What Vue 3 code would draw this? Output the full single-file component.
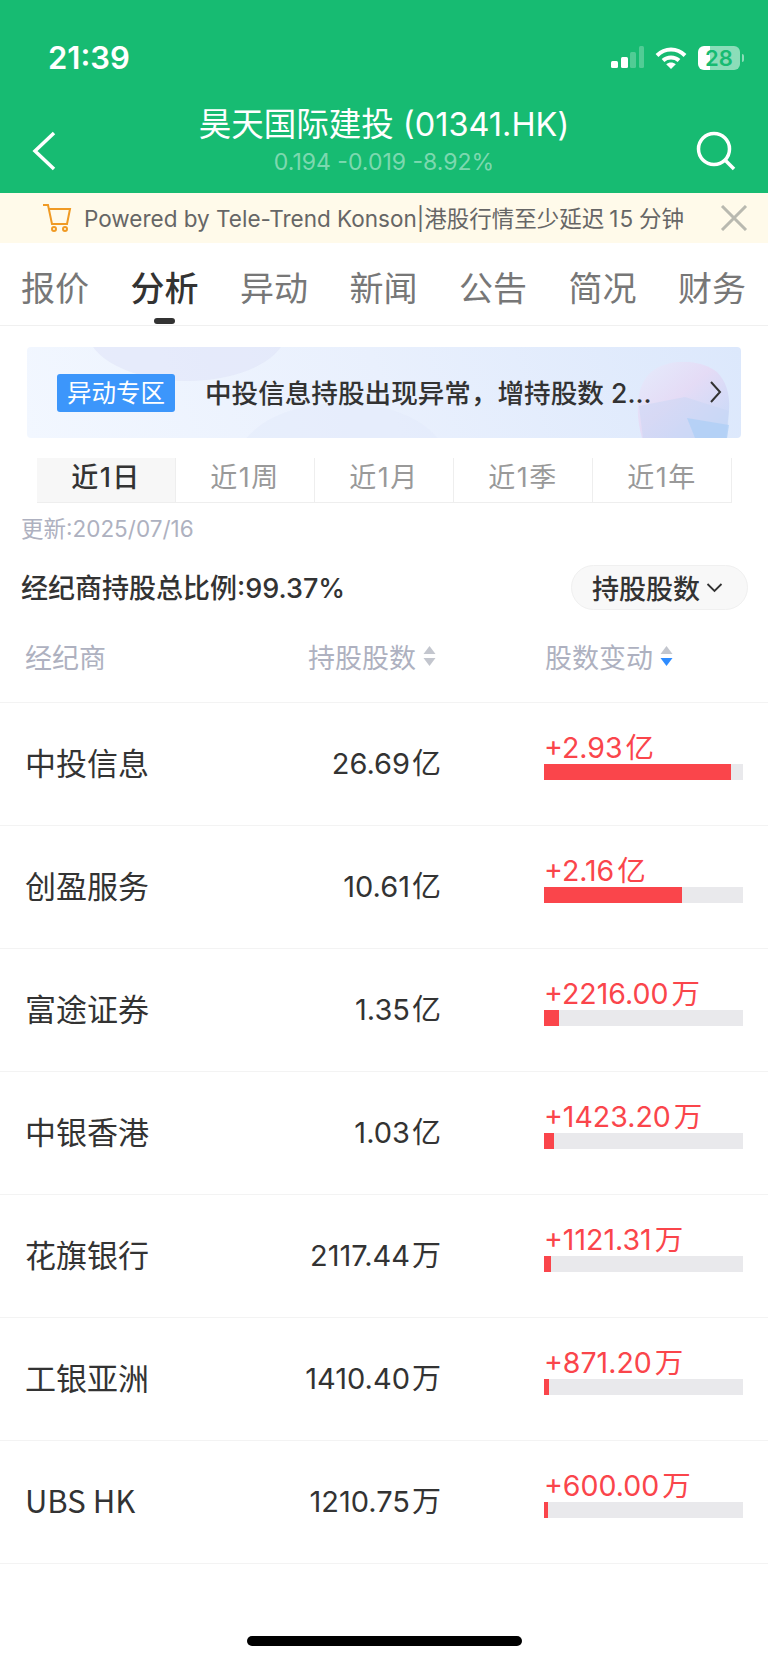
<template>
  <div class="page">
    <header class="top">
      <div class="status">
        <span class="time">21:39</span>
        <div class="status-icons">
          <svg width="34" height="24" viewBox="0 0 34 24">
            <rect x="1" y="15" width="7" height="7" rx="1.5" fill="#fff" />
            <rect x="11" y="11" width="7" height="11" rx="1.5" fill="#fff" />
            <rect x="20" y="6" width="6" height="16" rx="1.5" fill="#fff" opacity=".25" />
            <rect x="29" y="0" width="5" height="22" rx="1.5" fill="#fff" opacity=".25" />
          </svg>
          <svg width="32" height="24" viewBox="0 0 32 24" fill="none" stroke="#fff" stroke-width="4">
            <path d="M2 9.5C10 1.5 22 1.500 30 9.500" />
            <path d="M8 14.500C12.500 10.500 19.500 10.500 24 14.500" />
            <path d="M16 23l-4.800-4.800C14 16 18 16 20.800 18.200z" fill="#fff" stroke="none" />
          </svg>
          <div class="battery">
            <div class="battery-body"><span>28</span></div>
            <i></i>
          </div>
        </div>
      </div>
      <div class="nav">
        <svg class="nav-icon" width="24" height="40" viewBox="0 0 24 40" fill="none" stroke="#fff" stroke-width="3.500">
          <path d="M22 2L3 20l19 18" />
        </svg>
        <div class="nav-title">
          <div class="name">昊天国际建投 (01341.HK)</div>
          <div class="quote">0.194 -0.019 -8.92%</div>
        </div>
        <svg class="nav-icon" width="40" height="40" viewBox="0 0 40 40" fill="none" stroke="#fff" stroke-width="3.500">
          <circle cx="18" cy="18" r="15.500" />
          <path d="M29 29l9 9" />
        </svg>
      </div>
    </header>

    <div class="notice">
      <svg width="30" height="28" viewBox="0 0 30 28" fill="none" stroke="#f09a24" stroke-width="2">
        <path d="M1 1h5l4 19h15l3-15H7" />
        <circle cx="12" cy="25" r="2" />
        <circle cx="23" cy="25" r="2" />
      </svg>
      <span class="notice-text">Powered by Tele-Trend Konson|港股行情至少延迟<em>15</em>分钟</span>
      <svg width="28" height="26" viewBox="0 0 28 26" fill="none" stroke="#b9b9b0" stroke-width="3">
        <path d="M2 1l24 24M26 1L2 25" />
      </svg>
    </div>

    <nav class="tabs">
      <span v-for="t in tabs" :key="t" class="tab" :class="{ active: t === '分析' }">{{ t }}</span>
    </nav>

    <div class="banner">
      <div class="deco-a"></div>
      <div class="deco-b"></div>
      <svg class="deco-pie" width="93" height="76" viewBox="0 0 93 76">
        <defs>
          <linearGradient id="pieGrad" x1="0" y1="0" x2="1" y2="1">
            <stop offset="0" stop-color="#e6ecfc" />
            <stop offset=".45" stop-color="#e6d8f4" />
            <stop offset="1" stop-color="#bcd6f8" />
          </linearGradient>
        </defs>
        <path d="M5 76C-2 50-1 26 12 12 28-4 62-4 80 10c10 10 13 24 12 38l-3 28z" fill="url(#pieGrad)" opacity=".8" />
        <path d="M2 44l46-9 44 14-2 27H6z" fill="#c6d4f4" opacity=".45" />
        <path d="M50 56l42 7-2 13H58z" fill="#aecff6" opacity=".75" />
      </svg>
      <span class="banner-tag">异动专区</span>
      <span class="banner-text">中投信息持股出现异常，增持股数 2...</span>
      <svg class="banner-arrow" width="13" height="24" viewBox="0 0 13 24" fill="none" stroke="#333" stroke-width="2">
        <path d="M2 2l9 10-9 10" />
      </svg>
    </div>

    <div class="periods">
      <span v-for="(p, i) in periods" :key="p" class="period" :class="{ on: i === 0 }">{{ p }}</span>
    </div>

    <div class="updated">更新:2025/07/16</div>

    <div class="summary">
      <span class="summary-text">经纪商持股总比例:99.37%</span>
      <div class="pill">
        <span>持股股数</span>
        <svg width="17" height="10" viewBox="0 0 16 10" fill="none" stroke="#333" stroke-width="1.800">
          <path d="M1 1l7 7 7-7" />
        </svg>
      </div>
    </div>

    <div class="thead">
      <span class="col-name">经纪商</span>
      <span class="col-hold">
        持股股数
        <svg width="15" height="22" viewBox="0 0 14 22">
          <path d="M7 1l6 8H1z" fill="#c3c6ce" />
          <path d="M7 21l6-8H1z" fill="#c3c6ce" />
        </svg>
      </span>
      <span class="col-change">
        股数变动
        <svg width="15" height="22" viewBox="0 0 14 22">
          <path d="M7 1l6 8H1z" fill="#c3c6ce" />
          <path d="M7 21l6-8H1z" fill="#2f8cff" />
        </svg>
      </span>
    </div>

    <div v-for="row in rows" :key="row.name" class="row">
      <span class="col-name">{{ row.name }}</span>
      <span class="row-hold"><b>{{ row.hold }}</b>{{ row.unit }}</span>
      <div class="row-change">
        <div class="delta"><b>{{ row.delta }}</b>{{ row.deltaUnit }}</div>
        <div class="bar"><div class="bar-fill" :style="{ width: row.pct + '%' }"></div></div>
      </div>
    </div>

    <div class="home-wrap"><div class="home"></div></div>
  </div>
</template>

<script setup>
const tabs = ['报价', '分析', '异动', '新闻', '公告', '简况', '财务']
const periods = ['近1日', '近1周', '近1月', '近1季', '近1年']

const rows = [
  { name: '中投信息', hold: '26.69', unit: '亿', delta: '+2.93', deltaUnit: '亿', pct: 94 },
  { name: '创盈服务', hold: '10.61', unit: '亿', delta: '+2.16', deltaUnit: '亿', pct: 69.3 },
  { name: '富途证券', hold: '1.35', unit: '亿', delta: '+2216.00', deltaUnit: '万', pct: 7.5 },
  { name: '中银香港', hold: '1.03', unit: '亿', delta: '+1423.20', deltaUnit: '万', pct: 4.8 },
  { name: '花旗银行', hold: '2117.44', unit: '万', delta: '+1121.31', deltaUnit: '万', pct: 3.4 },
  { name: '工银亚洲', hold: '1410.40', unit: '万', delta: '+871.20', deltaUnit: '万', pct: 2.7 },
  { name: 'UBS HK', hold: '1210.75', unit: '万', delta: '+600.00', deltaUnit: '万', pct: 1.9 }
]
</script>

<style>
html,
body {
  margin: 0;
  background: #fff;
}
</style>

<style scoped>
.page {
  width: 768px;
  height: 1663px;
  overflow: hidden;
  font-family: Inter, "Noto Sans CJK SC", sans-serif;
  color: #333;
  background: #fff;
}

.top {
  height: 193px;
  background: #17bb72;
  color: #fff;
}

.status {
  display: flex;
  justify-content: space-between;
  align-items: center;
  padding: 40px 24px 0 48px;
  height: 36px;
}

.time {
  font-size: 31px;
  font-weight: 600;
  line-height: 36px;
}

.status-icons {
  display: flex;
  align-items: center;
  gap: 11px;
}

.battery {
  display: flex;
  align-items: center;
  gap: 2px;
}

.battery-body {
  width: 42px;
  height: 24px;
  border-radius: 6px;
  background: linear-gradient(90deg, #fff 0 28%, rgba(255, 255, 255, 0.5) 28%);
  color: #17bb72;
  font-size: 22px;
  font-weight: 600;
  line-height: 24px;
  text-align: center;
}

.battery i {
  display: block;
  width: 2px;
  height: 8px;
  border-radius: 0 2px 2px 0;
  background: rgba(255, 255, 255, 0.5);
}

.nav {
  display: flex;
  justify-content: space-between;
  align-items: flex-end;
  padding: 0 32px 0 32px;
  margin-top: 28px;
}

.nav-icon {
  flex: none;
}

.nav-title {
  text-align: center;
  margin: 0 0 -7px 16px;
}

.name {
  font-size: 32.500px;
  line-height: 42px;
}

.quote {
  font-size: 23px;
  line-height: 32px;
  color: rgba(255, 255, 255, 0.45);
}

.notice {
  height: 50px;
  display: flex;
  align-items: center;
  padding: 0 20px 0 42px;
  background: #fffaea;
}

.notice-text {
  flex: 1;
  margin: 0 0 3px 12px;
  font-size: 22.500px;
  color: #666;
  white-space: nowrap;
}

.notice-text em {
  font-style: normal;
  margin: 0 5px;
  letter-spacing: 1px;
}

.tabs {
  display: flex;
  gap: 41.500px;
  height: 83px;
  box-sizing: border-box;
  padding-left: 21px;
  border-bottom: 1px solid #f0f0f0;
  white-space: nowrap;
}

.tab {
  position: relative;
  font-size: 34px;
  line-height: 92px;
  color: #777;
}

.tab.active {
  color: #333;
  font-weight: 500;
}

.tab.active::after {
  content: "";
  position: absolute;
  left: 23px;
  bottom: 1px;
  width: 21px;
  height: 6px;
  border-radius: 3px;
  background: #333;
}

.banner {
  position: relative;
  overflow: hidden;
  display: flex;
  align-items: center;
  margin: 21px 27px 0;
  height: 91px;
  padding-left: 30px;
  border-radius: 4px;
  background: linear-gradient(70deg, #f2f7ff 0%, #e9f0fd 50%, #dce8fc 100%);
}

.deco-a {
  position: absolute;
  left: 60px;
  top: -70px;
  width: 200px;
  height: 104px;
  border-radius: 50%;
  background: rgba(222, 226, 248, 0.5);
}

.deco-b {
  position: absolute;
  left: 210px;
  top: 56px;
  width: 210px;
  height: 120px;
  border-radius: 50%;
  background: rgba(225, 232, 250, 0.4);
}

.deco-pie {
  position: absolute;
  right: 11px;
  bottom: 0;
}

.banner-tag {
  position: relative;
  width: 118px;
  height: 38px;
  border-radius: 3px;
  background: #3c96fb;
  color: #fff;
  font-size: 24.500px;
  line-height: 38px;
  text-align: center;
}

.banner-text {
  position: relative;
  margin: 0 0 3px 30px;
  font-size: 26.600px;
  font-weight: 500;
  white-space: nowrap;
}

.banner-arrow {
  position: absolute;
  right: 19px;
  top: 33px;
}

.periods {
  display: flex;
  margin: 20px 36px 0 37px;
  height: 44px;
  border-bottom: 1px solid #eee;
  border-right: 1px solid #eee;
}

.period {
  flex: 1;
  border-right: 1px solid #eee;
  font-size: 27px;
  letter-spacing: 1.500px;
  line-height: 40px;
  text-align: center;
  color: #999;
}

.period:last-child {
  border-right: 0;
}

.period.on {
  background: #f7f7f7;
  color: #333;
  font-weight: 500;
}

.updated {
  margin: 11px 0 0 21px;
  font-size: 22.500px;
  line-height: 30px;
  color: #aeb1c0;
}

.summary {
  display: flex;
  justify-content: space-between;
  align-items: center;
  margin-top: 21px;
  padding: 0 20px 0 21px;
}

.summary-text {
  padding-top: 3px;
  font-size: 27px;
  font-weight: 500;
  line-height: 42px;
}

.pill {
  display: flex;
  align-items: center;
  gap: 6px;
  width: 177px;
  height: 45px;
  box-sizing: border-box;
  padding-left: 20px;
  border: 1px solid #f0f0f0;
  border-radius: 23px;
  background: #f8f8f8;
  font-size: 27px;
  font-weight: 500;
}

.thead {
  display: grid;
  grid-template-columns: 283px 237px 1fr;
  align-items: center;
  height: 92px;
  padding-left: 25px;
  border-bottom: 1px solid #f3f3f3;
  font-size: 27px;
  color: #aeb1c0;
}

.col-hold,
.col-change {
  display: flex;
  align-items: center;
  gap: 6px;
}

.row {
  display: grid;
  grid-template-columns: 252px 164px 1fr;
  align-items: center;
  height: 123px;
  box-sizing: border-box;
  padding: 0 0 6px 25px;
  border-bottom: 1px solid #f3f3f3;
}

.row .col-name {
  font-family: "Noto Sans CJK SC", sans-serif;
  font-size: 31px;
  color: #333;
  white-space: nowrap;
}

.row-hold {
  font-size: 29px;
  text-align: right;
  white-space: nowrap;
}

.row-hold b,
.delta b {
  font-weight: 400;
  margin-right: 2px;
}

.row-change {
  margin-left: 103px;
  width: 199px;
  margin-top: -10px;
}

.delta {
  font-size: 28.500px;
  line-height: 32px;
  color: #fa454b;
  white-space: nowrap;
}

.delta b {
  margin-right: 3px;
}

.bar {
  height: 16px;
  background: #e9e9ec;
}

.bar-fill {
  height: 100%;
  background: #fa454b;
}

.home-wrap {
  display: flex;
  justify-content: center;
  margin-top: 72px;
}

.home {
  width: 275px;
  height: 10px;
  border-radius: 5px;
  background: #000;
}
</style>
